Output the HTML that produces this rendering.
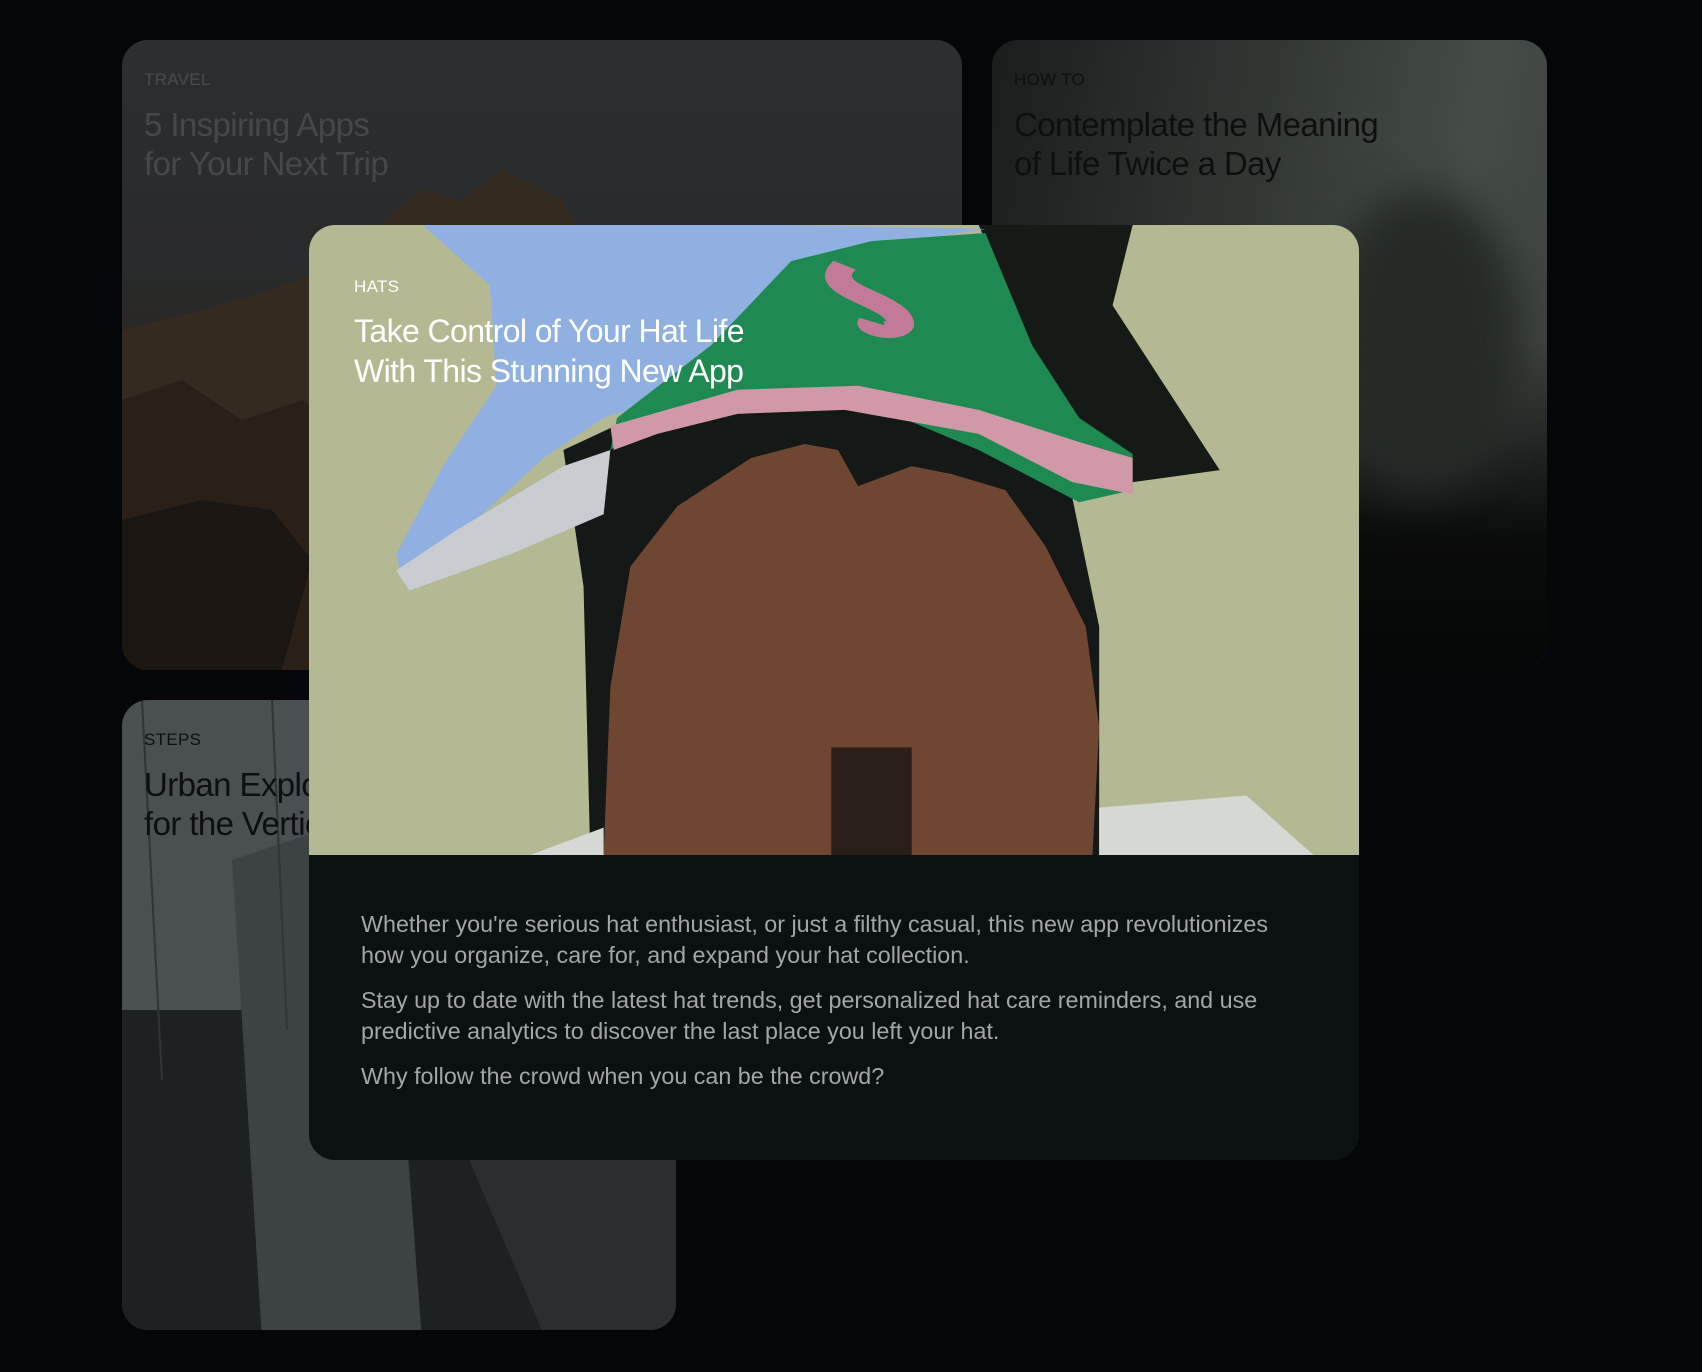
<!DOCTYPE html>
<html><head><meta charset="utf-8"><style>
*{margin:0;padding:0;box-sizing:border-box}
body{width:1702px;height:1372px;background:#04060a;font-family:"Liberation Sans",sans-serif;position:relative;overflow:hidden}
.card{position:absolute;border-radius:26px;overflow:hidden}
.lbl{position:absolute;font-size:17px;letter-spacing:.3px}
.ttl{position:absolute;font-size:33px;line-height:39px;letter-spacing:-.6px}
</style></head><body>

<div class="card" style="left:122px;top:40px;width:840px;height:630px;background:linear-gradient(180deg,#2c2e31 0%,#292a2b 35%,#2a2520 60%,#231d18 100%)">
  <svg width="840" height="630" style="position:absolute;left:0;top:0">
    <path d="M0 290 L80 270 L150 250 L200 230 L300 150 L340 160 L380 130 L440 160 L480 230 L520 250 L520 630 L0 630Z" fill="#352a20"/>
    <path d="M0 360 L60 340 L120 380 L180 360 L260 420 L250 630 L0 630Z" fill="#2a2018"/>
    <path d="M0 480 L80 460 L150 470 L190 520 L160 630 L0 630Z" fill="#1c1612"/>
  </svg>
  <div class="lbl" style="left:22px;top:30px;color:#4a4b4d">TRAVEL</div>
  <div class="ttl" style="left:22px;top:65px;color:#45474a">5 Inspiring Apps<br>for Your Next Trip</div>
</div>

<div class="card" style="left:992px;top:40px;width:555px;height:630px;background:linear-gradient(100deg,#1a1d1c 0%,#303532 40%,#454b46 75%,#3b403c 100%)">
  <div style="position:absolute;left:0;top:300px;width:555px;height:330px;background:linear-gradient(180deg,rgba(0,0,0,0) 0%,#0a0b0b 60%,#050606 100%)"></div>
  <div style="position:absolute;left:330px;top:150px;width:200px;height:300px;border-radius:50%;background:#252a27;filter:blur(20px)"></div>
  <div class="lbl" style="left:22px;top:30px;color:#0d0f0f">HOW TO</div>
  <div class="ttl" style="left:22px;top:65px;color:#0d0f0f">Contemplate the Meaning<br>of Life Twice a Day</div>
</div>

<div class="card" style="left:122px;top:700px;width:554px;height:630px;background:#4a5051">
  <svg width="554" height="630" style="position:absolute;left:0;top:0">
    <rect x="0" y="310" width="554" height="320" fill="#1e2122"/>
    <path d="M110 160 L260 110 L300 640 L140 640Z" fill="#3d4243"/>
    <path d="M330 420 L554 420 L554 630 L420 630Z" fill="#2a2e2f"/>
    <path d="M20 0 L40 380" stroke="#2f3536" stroke-width="2"/>
    <path d="M150 0 L165 330" stroke="#2f3536" stroke-width="2"/>
  </svg>
  <div class="lbl" style="left:22px;top:30px;color:#0d0f0f">STEPS</div>
  <div class="ttl" style="left:22px;top:65px;color:#0d0f0f">Urban Exploration<br>for the Vertical</div>
</div>

<div class="card" style="left:309px;top:225px;width:1050px;height:935px;background:#0b1112">
  <svg width="1050" height="630" viewBox="0 0 1568 1568" preserveAspectRatio="none" style="position:absolute;left:0;top:0">
    <rect width="1568" height="1568" fill="#b4b893"/>
    <path d="M1000 0 L1230 0 L1200 200 L1360 610 L1230 640 L1130 500Z" fill="#151a17"/>
    <path d="M380 560 L560 420 L1130 380 L1140 680 L1180 1000 L1180 1568 L420 1568 L410 900Z" fill="#141817"/>
    <path d="M170 0 L720 0 L1010 10 L820 60 L700 200 L560 420 L440 480 L350 580 L220 780 L140 880 L130 820 L200 600 L280 400 L270 150Z" fill="#8fb0e0"/>
    <path d="M130 860 L220 760 L380 600 L450 560 L440 720 L300 820 L150 910Z" fill="#c9cdd2"/>
    <path d="M720 90 L840 40 L1010 20 L1080 300 L1150 480 L1230 570 L1230 660 L1150 690 L1000 560 L800 420 L640 430 L500 500 L450 560 L460 480 L600 300Z" fill="#1e8a52"/>
    <path d="M450 500 L640 410 L820 400 L1000 460 L1150 540 L1230 580 L1230 670 L1140 640 L1000 520 L800 460 L640 470 L520 520 L455 560Z" fill="#d199a7"/>
    <path d="M800 100 C760 160 860 180 880 230 C900 280 830 260 840 240" stroke="#c27a98" stroke-width="40" fill="none"/>
    <path d="M440 1568 L450 1150 L480 850 L550 700 L660 580 L740 545 L790 560 L820 650 L900 600 L960 620 L1040 660 L1100 800 L1160 1000 L1180 1250 L1170 1568Z" fill="#6e4632"/>
    <path d="M780 1300 L900 1300 L900 1568 L780 1568Z" fill="#2a1e18"/>
    <path d="M1180 1450 L1400 1420 L1500 1568 L1180 1568Z" fill="#d6d8d4"/>
    <path d="M330 1568 L440 1500 L440 1568Z" fill="#d6d8d4"/>
  </svg>
  <div class="lbl" style="left:45px;top:52px;color:#fff">HATS</div>
  <div class="ttl" style="left:45px;top:86px;color:#fff;font-size:32px;line-height:40px">Take Control of Your Hat Life<br>With This Stunning New App</div>
  <div style="position:absolute;left:52px;top:684px;width:935px;color:#a3a5a6;font-size:23.3px;line-height:31px">
    <p style="margin-bottom:14px">Whether you're serious hat enthusiast, or just a filthy casual, this new app revolutionizes how you organize, care for, and expand your hat collection.</p>
    <p style="margin-bottom:14px">Stay up to date with the latest hat trends, get personalized hat care reminders, and use predictive analytics to discover the last place you left your hat.</p>
    <p>Why follow the crowd when you can be the crowd?</p>
  </div>
</div>
</body></html>
